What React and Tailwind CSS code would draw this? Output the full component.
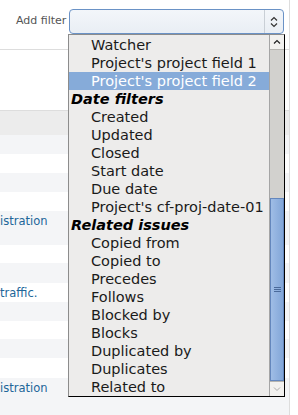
import React from "react";

const F = { fontFamily: '"DejaVu Sans", Verdana, sans-serif' };

const items = [
  { t: "Watcher" },
  { t: "Project's project field 1" },
  { t: "Project's project field 2", sel: true },
  { t: "Date filters", g: true },
  { t: "Created" },
  { t: "Updated" },
  { t: "Closed" },
  { t: "Start date" },
  { t: "Due date" },
  { t: "Project's cf-proj-date-01" },
  { t: "Related issues", g: true },
  { t: "Copied from" },
  { t: "Copied to" },
  { t: "Precedes" },
  { t: "Follows" },
  { t: "Blocked by" },
  { t: "Blocks" },
  { t: "Duplicated by" },
  { t: "Duplicates" },
  { t: "Related to" },
];

const rows = [
  { bg: "bg-[#f4f5f7]", h: "h-[19px]" },
  { bg: "bg-white", h: "h-[19px]" },
  { bg: "bg-[#f4f5f7]", h: "h-[19px]" },
  { bg: "bg-white", h: "h-[19px]" },
  { bg: "bg-[#f4f5f7]", h: "h-[34px]", t: "istration" },
  { bg: "bg-white", h: "h-[18px]" },
  { bg: "bg-[#f4f5f7]", h: "h-[20px]" },
  { bg: "bg-white", h: "h-[19px]", t: "traffic." },
  { bg: "bg-[#f4f5f7]", h: "h-[19px]" },
  { bg: "bg-white", h: "h-[18px]" },
  { bg: "bg-[#f4f5f7]", h: "h-[19px]" },
  { bg: "bg-white", h: "h-[20px]" },
  { bg: "bg-[#f4f5f7]", h: "h-[22px]", t: "istration" },
];

export default function App() {
  return (
    <div className="relative w-[298px] h-[415px] overflow-hidden bg-white" style={F}>
      <div className="w-[290px] border-r border-[#dddddd] h-[415px] flex flex-col bg-[#f4f5f7]">
        <div className="h-[50px] flex items-start pt-[9px] border-b border-[#dddddd] bg-white">
          <span className="ml-[16px] mt-[5px] text-[11px] text-[#555555] leading-[14px] w-[53px]">Add filter</span>
          <div className="ml-0 w-[215px] h-[25px] rounded-[4px] border border-[#6a92c6] bg-gradient-to-b from-[#f3f6fa] to-[#e9eef4] flex justify-end">
            <div className="w-[19px] h-full border-l border-[#c9cfd6] flex items-center justify-center">
              <svg width="8" height="12" viewBox="0 0 8 12" fill="none" stroke="#333" strokeWidth="1.2">
                <path d="M1 4.5 L4 1.5 L7 4.5" />
                <path d="M1 7.5 L4 10.5 L7 7.5" />
              </svg>
            </div>
          </div>
        </div>
        <div className="h-[60px] bg-white" />
        <div className="h-[25px] border-t border-[#dddddd] bg-[#ececec]" />
        {rows.map((r, i) => (
          <div key={i} className={`${r.bg} ${r.h} flex items-start`}>
            {r.t && (
              <span className="text-[11.5px] leading-[18px] text-[#226699] pt-[1px] whitespace-nowrap">{r.t}</span>
            )}
          </div>
        ))}
      </div>

      <div className="absolute left-[68px] top-[34px] w-[217px] h-[363px] bg-[#edeceb] border border-black border-l-[#8c8c8c] border-t-[#8c8c8c] flex">
        <div className="flex-1 pt-[1px] overflow-hidden">
          {items.map((it, i) => (
            <div
              key={i}
              className={`h-[18px] leading-[18px] whitespace-nowrap text-[14.5px] ${
                it.g ? "pl-[2px] font-bold italic text-black" : "pl-[22px] text-[#1a1a1a]"
              } ${it.sel ? "bg-[#86abd9] text-white" : ""}`}
            >
              {it.t}
            </div>
          ))}
        </div>
        <div className="w-[15px] flex flex-col border-l border-[#a5a5a5] bg-[#d2d1ce]">
          <div className="h-[15px] bg-[#f2f1ef] border-b border-[#b5b4b0] flex items-center justify-center">
            <svg width="8" height="6" viewBox="0 0 8 6" fill="none" stroke="#222" strokeWidth="1.2">
              <path d="M1 4.5 L4 1.5 L7 4.5" />
            </svg>
          </div>
          <div className="h-[148px]" />
          <div className="flex-1 bg-gradient-to-r from-[#9fbde6] to-[#82a6d8] border border-[#6487bd] flex items-center justify-center">
            <svg width="7" height="6" viewBox="0 0 7 6" stroke="#4a6a9a" strokeWidth="1">
              <path d="M0 0.5 H7 M0 2.5 H7 M0 4.5 H7" />
            </svg>
          </div>
          <div className="h-[15px] bg-[#f2f1ef] border-t border-[#b5b4b0] flex items-center justify-center">
            <svg width="8" height="6" viewBox="0 0 8 6" fill="none" stroke="#aaa" strokeWidth="1">
              <path d="M1 1.5 L4 4.5 L7 1.5" />
            </svg>
          </div>
        </div>
      </div>
    </div>
  );
}
